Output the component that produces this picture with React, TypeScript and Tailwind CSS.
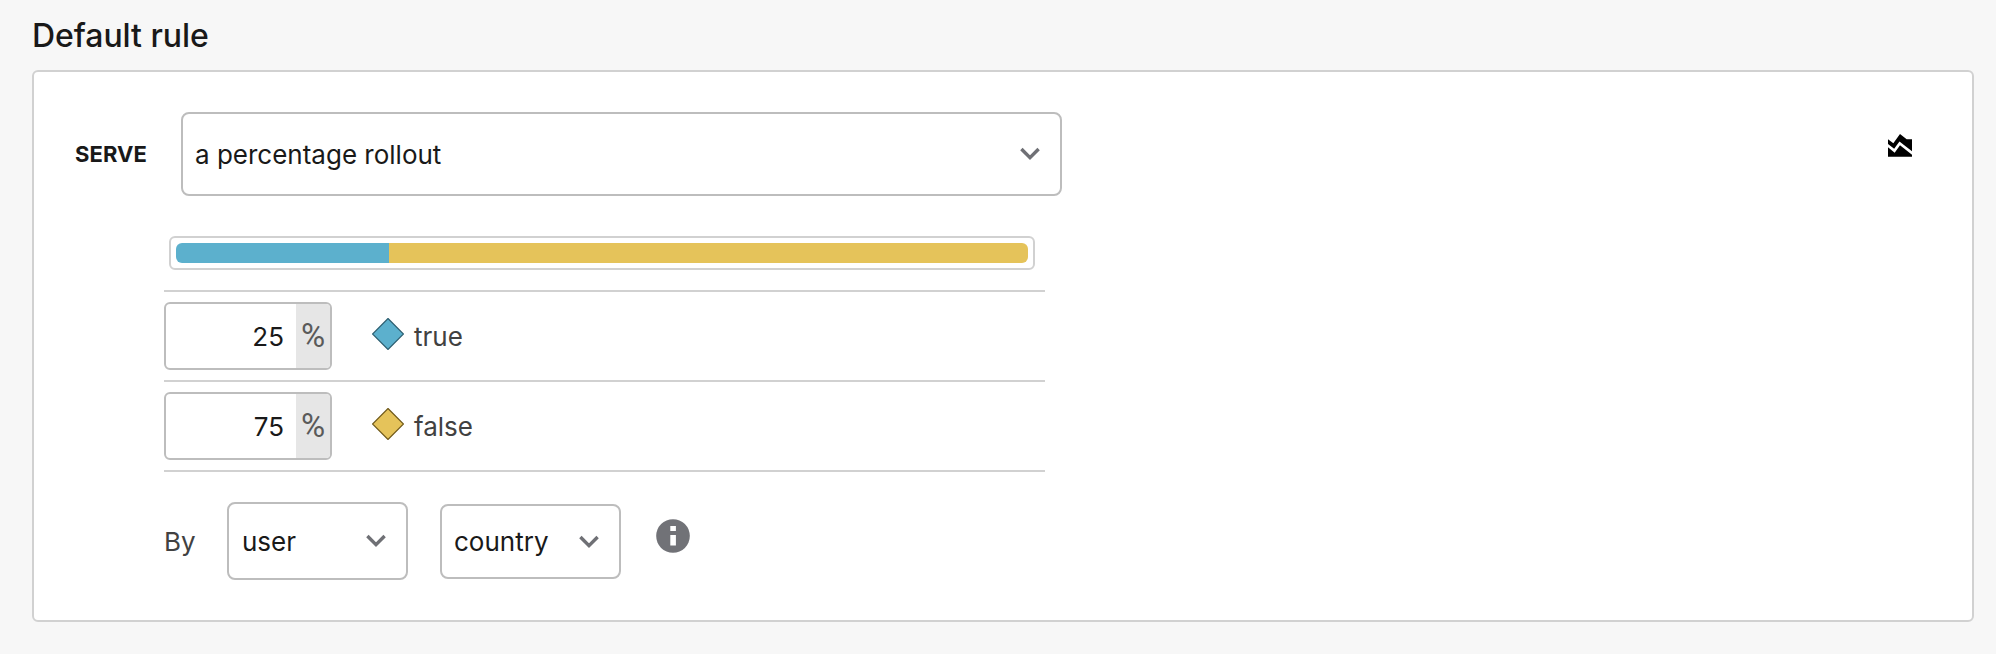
import React from "react";
import { MdAreaChart } from "react-icons/md";

function Chevron() {
  return (
    <svg className="block h-[14px] w-5 shrink-0" viewBox="0 0 20 14" fill="none">
      <path d="M1.4 2 L10 10.6 L18.6 2" stroke="#6f7075" strokeWidth="3.4" />
    </svg>
  );
}

function InfoIcon() {
  return (
    <svg className="block h-[34px] w-[34px]" viewBox="0 0 34 34">
      <circle cx="17" cy="17" r="16.8" fill="#717277" />
      <rect x="14.3" y="7" width="5.6" height="5" fill="#fff" />
      <rect x="14.3" y="16" width="5.6" height="10.5" fill="#fff" />
    </svg>
  );
}

function Select({ label, className }: { label: string; className: string }) {
  return (
    <div
      className={
        "flex items-center justify-between rounded-[8px] border-2 border-[#bdbdbd] bg-white text-[26px] text-[#191919] " +
        className
      }
    >
      <span className="whitespace-nowrap">{label}</span>
      <Chevron />
    </div>
  );
}

function Variation({ percent, name, color, stroke }: { percent: number; name: string; color: string; stroke: string }) {
  return (
    <div className="flex h-[90px] items-start border-b-2 border-[#d1d1d1] pt-[10px]">
      <div className="flex h-[68px] w-[168px] overflow-hidden rounded-[6px] border-2 border-[#bdbdbd]">
        <div className="flex-1 pr-3 pt-px text-right text-[26px] leading-[64px] text-[#191919]">{percent}</div>
        <div className="w-[34px] bg-[#e6e6e6] text-center font-[Roboto,sans-serif] text-[33px] leading-[63px] text-[#5a5a5a]">
          %
        </div>
      </div>
      <svg className="ml-10 mt-4 block h-8 w-8" viewBox="0 0 32 32">
        <path d="M16 0.5 L31.5 16 L16 31.5 L0.5 16 Z" fill={color} stroke={stroke} strokeWidth="1.2" />
      </svg>
      <span className="ml-[10px] pt-[3px] text-[26px] leading-[64px] text-[#414141]">{name}</span>
    </div>
  );
}

export default function App() {
  return (
    <div className="h-[654px] w-[1996px] overflow-hidden bg-[#f7f7f7] pl-8 font-['Inter',sans-serif]">
      <h2 className="h-[70px] pt-[16px] text-[32px] font-medium leading-[40px] tracking-[-0.06px] text-[#191919]">
        Default rule
      </h2>
      <section className="h-[552px] w-[1942px] rounded-[6px] border-2 border-[#d1d1d1] bg-white pt-10">
        <div className="flex h-[84px] items-start">
          <span className="w-[147px] pl-[41px] text-[22px] font-bold leading-[84px] tracking-[0.1px] text-[#191919]">SERVE</span>
          <Select label="a percentage rollout" className="h-[84px] w-[881px] pl-3 pr-5" />
          <MdAreaChart className="ml-[822px] mt-[18px] h-8 w-8 text-black" />
        </div>
        <div className="ml-[135px] mt-10 h-[34px] w-[866px] rounded-[6px] border-2 border-[#d1d1d1] p-[5px]">
          <div className="flex h-5 overflow-hidden rounded-[6px]">
            <div className="w-1/4 bg-[#5cb0cd]" />
            <div className="w-3/4 bg-[#e5c35a]" />
          </div>
        </div>
        <div className="ml-[130px] mt-5 w-[881px] border-t-2 border-[#d1d1d1]">
          <Variation percent={25} name="true" color="#5cb0cd" stroke="#2c5e70" />
          <Variation percent={75} name="false" color="#e5c35a" stroke="#6e5818" />
        </div>
        <div className="ml-[130px] flex items-start pt-[30px]">
          <span className="w-[63px] pt-[1px] text-[26px] leading-[78px] text-[#414141]">By</span>
          <Select label="user" className="h-[78px] w-[181px] pl-[13px] pr-5" />
          <Select label="country" className="ml-8 mt-[2px] h-[75px] w-[181px] pl-3 pr-5" />
          <div className="ml-[35px] mt-[17px]">
            <InfoIcon />
          </div>
        </div>
      </section>
    </div>
  );
}
